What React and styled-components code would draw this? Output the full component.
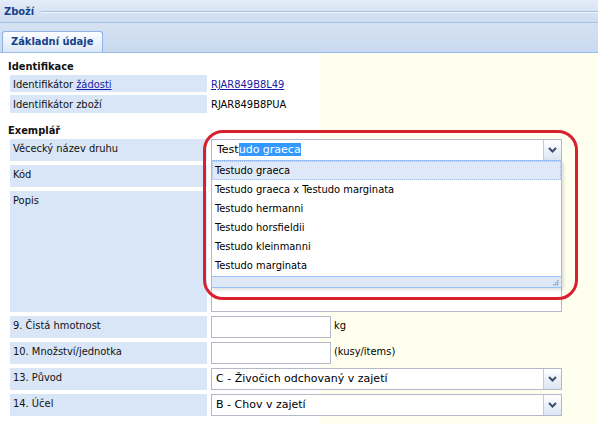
import React from 'react'
import styled, { createGlobalStyle } from 'styled-components'

const GlobalStyle = createGlobalStyle`
  html, body {
    margin: 0;
    padding: 0;
    background: #fff;
  }
  body {
    font-family: Tahoma, "DejaVu Sans Condensed", "DejaVu Sans", sans-serif;
    font-size: 11px;
    color: #000;
  }
`

const species = [
  'Testudo graeca',
  'Testudo graeca x Testudo marginata',
  'Testudo hermanni',
  'Testudo horsfieldii',
  'Testudo kleinmanni',
  'Testudo marginata',
]

function Chevron() {
  return (
    <svg width="9" height="6" viewBox="0 0 9 6">
      <polyline points="1,1 4.5,4.5 8,1" fill="none" stroke="#3b4d6e" strokeWidth="2" />
    </svg>
  )
}

function Grip() {
  return (
    <svg width="6" height="6" viewBox="0 0 6 6">
      <rect x="4" y="0" width="1.5" height="1.5" fill="#8aa6cf" />
      <rect x="2" y="2" width="1.5" height="1.5" fill="#8aa6cf" />
      <rect x="4" y="2" width="1.5" height="1.5" fill="#8aa6cf" />
      <rect x="0" y="4" width="1.5" height="1.5" fill="#8aa6cf" />
      <rect x="2" y="4" width="1.5" height="1.5" fill="#8aa6cf" />
      <rect x="4" y="4" width="1.5" height="1.5" fill="#8aa6cf" />
    </svg>
  )
}

function App() {
  return (
    <>
      <GlobalStyle />
      <Panel>
        <PanelHeader>
          <PanelTitle>Zboží</PanelTitle>
          <HeaderRule />
        </PanelHeader>
        <TabStrip>
          <Tab>Základní údaje</Tab>
        </TabStrip>
        <Content>
          <SectionTitle>Identifikace</SectionTitle>
          <FormGrid $gap={3}>
            <Label $h={17}>Identifikátor <Link>žádosti</Link></Label>
            <Value $text><Link>RJAR849B8L49</Link></Value>
            <Label $h={18}>Identifikátor zboží</Label>
            <Value $text>RJAR849B8PUA</Value>
          </FormGrid>

          <SectionTitle $top={11}>Exemplář</SectionTitle>
          <FormGrid $gap={4}>
            <Label $h={22}>Věcecký název druhu</Label>
            <Value>
              <Combo $w={351}>
                <ComboText $pad={5}>Test<Selected>udo graeca</Selected></ComboText>
                <Trigger><Chevron /></Trigger>
                <ListBox>
                  {species.map((s, i) => (
                    <ListItem key={s} $active={i === 0}>{s}</ListItem>
                  ))}
                  <ListFooter><Grip /></ListFooter>
                </ListBox>
              </Combo>
            </Value>

            <Label $h={22}>Kód</Label>
            <Value><TextInput $w={351} /></Value>

            <Label $h={121}>Popis</Label>
            <Value><TextArea /></Value>

            <Label $h={22}>9. Čistá hmotnost</Label>
            <Value>
              <TextInput $w={120} />
              <Unit>kg</Unit>
            </Value>

            <Label $h={22}>10. Množství/jednotka</Label>
            <Value>
              <TextInput $w={120} />
              <Unit>(kusy/items)</Unit>
            </Value>

            <Label $h={22}>13. Původ</Label>
            <Value>
              <Combo $w={351}>
                <ComboText>C - Živočich odchovaný v zajetí</ComboText>
                <Trigger><Chevron /></Trigger>
              </Combo>
            </Value>

            <Label $h={22}>14. Účel</Label>
            <Value>
              <Combo $w={351}>
                <ComboText>B - Chov v zajetí</ComboText>
                <Trigger><Chevron /></Trigger>
              </Combo>
            </Value>
          </FormGrid>
        </Content>
        <Highlight />
      </Panel>
    </>
  )
}

export default App

const Panel = styled.div`
  position: relative;
  width: 598px;
  height: 424px;
  overflow: hidden;
  display: flex;
  flex-direction: column;
`

const PanelHeader = styled.div`
  height: 22px;
  display: flex;
  align-items: center;
  padding-left: 4px;
  background: linear-gradient(#e3ecf8, #cddcf0);
  border-bottom: 1px solid #a9c2e4;
`

const PanelTitle = styled.span`
  font-weight: bold;
  color: #15428b;
`

const HeaderRule = styled.div`
  flex: 1;
  margin-left: 7px;
  margin-top: 2px;
  border-top: 1px solid #a8c0e0;
  border-bottom: 1px solid #f2f6fc;
`

const TabStrip = styled.div`
  height: 29px;
  display: flex;
  align-items: flex-end;
  padding-left: 2px;
  background: linear-gradient(#d5e2f3, #c9d9ef);
  border-bottom: 1px solid #99bbe8;
`

const Tab = styled.div`
  height: 20px;
  line-height: 20px;
  padding: 0 8px;
  width: 83px;
  border: 1px solid #8db2e3;
  border-bottom: none;
  border-radius: 3px 3px 0 0;
  background: linear-gradient(#fbfdff, #dce7f6);
  color: #15428b;
  font-weight: bold;
`

const Content = styled.div`
  flex: 1;
  padding: 7px 0 0 10px;
  background: linear-gradient(to right, #fff 0, #fff 320px, #ffffef 320px);
`

const SectionTitle = styled.div`
  height: 14px;
  line-height: 14px;
  margin: ${p => p.$top || 0}px 0 1px -2px;
  font-weight: bold;
  color: #111;
`

const FormGrid = styled.div`
  display: grid;
  grid-template-columns: 197px 1fr;
  column-gap: 4px;
  row-gap: ${p => p.$gap}px;
`

const Label = styled.div`
  height: ${p => p.$h}px;
  box-sizing: border-box;
  padding: 2px 3px;
  line-height: 15px;
  background: #d9e6f7;
  color: #111;
  white-space: nowrap;
`

const Value = styled.div`
  display: flex;
  align-items: flex-start;
  padding-top: ${p => (p.$text ? 2 : 0)}px;
  line-height: 15px;
`

const Link = styled.span`
  color: #1a1aa6;
  text-decoration: underline;
`

const Combo = styled.div`
  position: relative;
  width: ${p => p.$w}px;
  height: 22px;
  box-sizing: border-box;
  display: flex;
  border: 1px solid #b5b8c8;
  background: #fff;
`

const ComboText = styled.div`
  flex: 1;
  padding-left: ${p => p.$pad || 4}px;
  line-height: 20px;
  font-family: Verdana, "DejaVu Sans", sans-serif;
  font-size: 11px;
  white-space: nowrap;
`

const Selected = styled.span`
  background: #3399ff;
  color: #fff;
`

const Trigger = styled.div`
  width: 17px;
  border-left: 1px solid #c3cad8;
  background: linear-gradient(#ffffff, #dbe5f3);
  display: flex;
  align-items: center;
  justify-content: center;
`

const ListBox = styled.div`
  position: absolute;
  top: 100%;
  left: -1px;
  width: 351px;
  box-sizing: border-box;
  border: 1px solid #98c0f4;
  background: #fff;
  box-shadow: 2px 2px 3px rgba(0, 0, 0, 0.12);
  z-index: 2;
`

const ListItem = styled.div`
  height: 19px;
  line-height: 17px;
  box-sizing: border-box;
  padding-left: 2px;
  border: 1px ${p => (p.$active ? 'dotted #a3bae9' : 'solid transparent')};
  background: ${p => (p.$active ? '#dfe8f6' : 'transparent')};
  white-space: nowrap;
`

const ListFooter = styled.div`
  height: 9px;
  margin-top: 1px;
  border-top: 1px solid #98c0f4;
  background: #dfe8f6;
  display: flex;
  justify-content: flex-end;
  align-items: flex-end;
  padding: 0 2px 1px 0;
`

const TextInput = styled.div`
  width: ${p => p.$w}px;
  height: 22px;
  box-sizing: border-box;
  border: 1px solid #b5b8c8;
  background: #fff;
`

const TextArea = styled.div`
  width: 351px;
  height: 121px;
  box-sizing: border-box;
  border: 1px solid #b5b8c8;
  background: #fff;
`

const Unit = styled.span`
  margin-left: 3px;
  padding-top: 2px;
  white-space: nowrap;
`

const Highlight = styled.div`
  position: absolute;
  left: 203px;
  top: 130px;
  width: 375px;
  height: 170px;
  box-sizing: border-box;
  border: 3px solid #d8202f;
  border-radius: 20px;
  z-index: 5;
  pointer-events: none;
`
